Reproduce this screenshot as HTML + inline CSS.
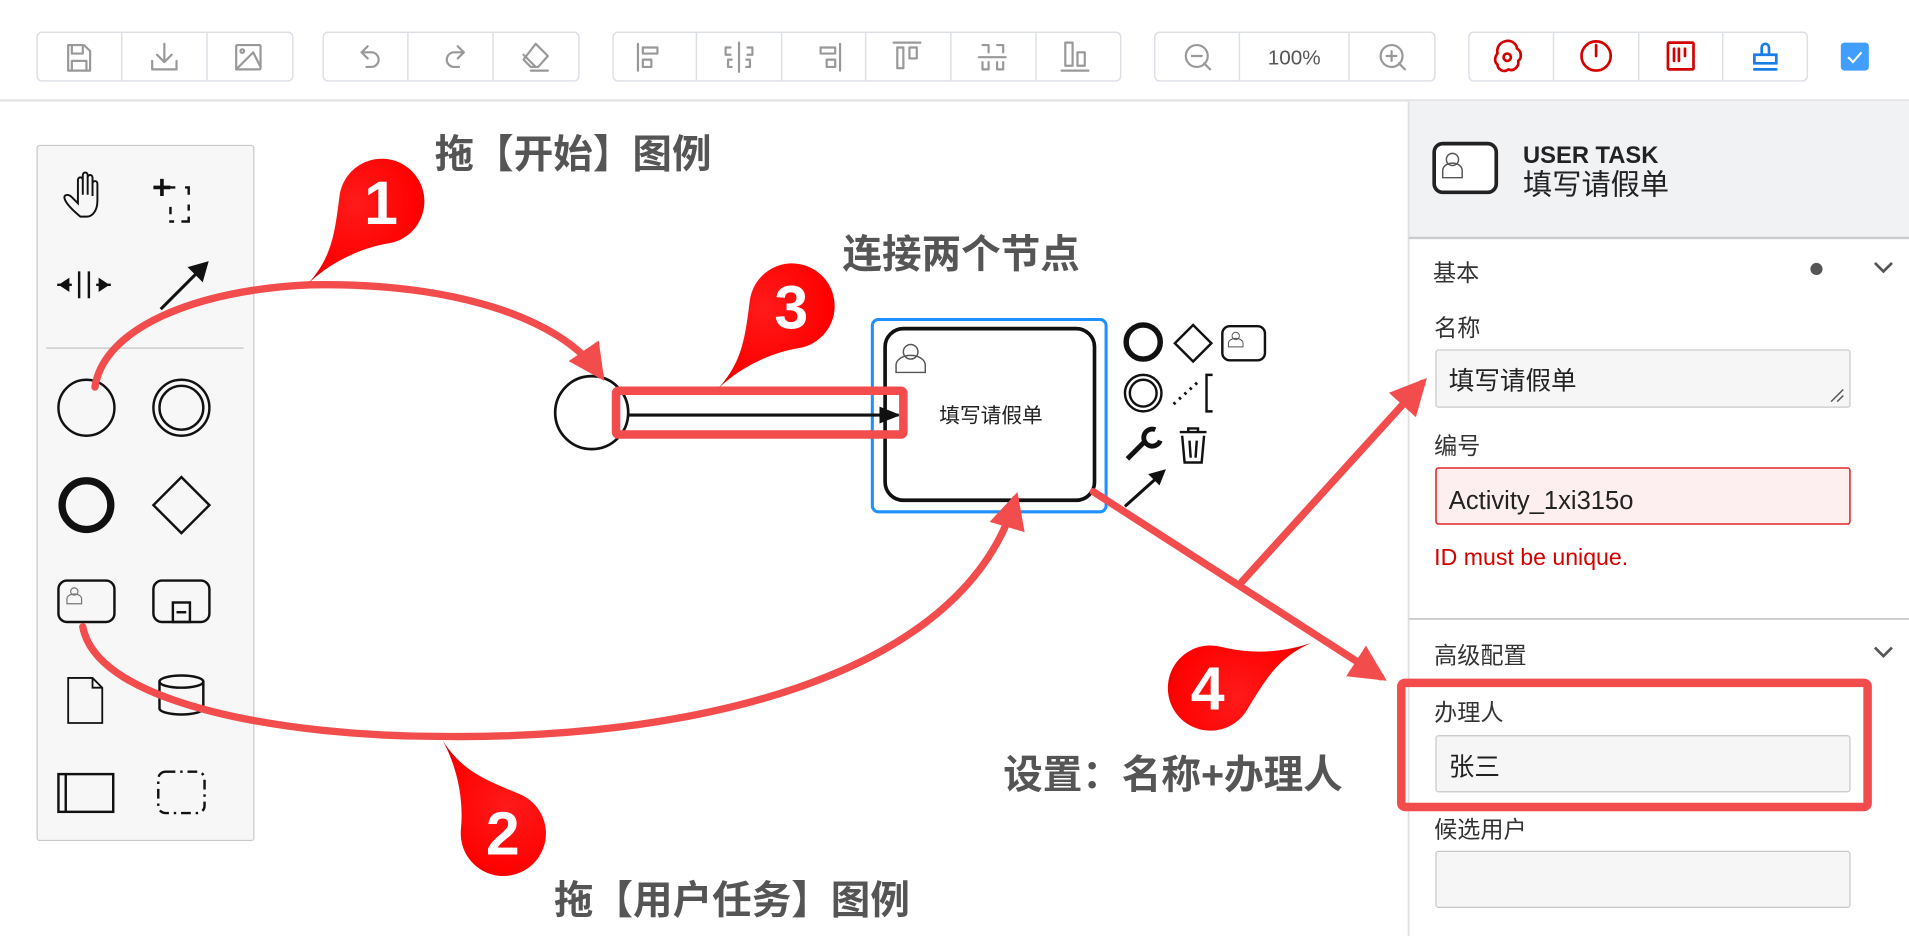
<!DOCTYPE html>
<html><head><meta charset="utf-8">
<style>
html,body{margin:0;padding:0;background:#fff;overflow:hidden}
svg{display:block}
text{font-family:"Liberation Sans","Noto Sans CJK SC",sans-serif}
.lbl{font-size:19px;fill:#333}
.big{font-size:32.5px;font-weight:bold;fill:#555}
.ti{fill:none;stroke:#999;stroke-width:1.8;stroke-linecap:round;stroke-linejoin:round}
.tr{fill:none;stroke:#d40000;stroke-width:2.2;stroke-linecap:round;stroke-linejoin:round}
.k{fill:none;stroke:#111;stroke-width:2}
</style></head><body>
<svg width="1909" height="936" viewBox="0 0 1568 769" preserveAspectRatio="none" xmlns="http://www.w3.org/2000/svg">
<defs>
<marker id="ah" viewBox="0 0 10 10" refX="8" refY="5" markerWidth="5" markerHeight="5" orient="auto"><path d="M0,0 L10,5 L0,10 Z" fill="#f24c4c"/></marker>
<marker id="bh" viewBox="0 0 10 10" refX="9" refY="5" markerWidth="7" markerHeight="7" orient="auto"><path d="M0,1 L10,5 L0,9 Z" fill="#111"/></marker>
<radialGradient id="pg" cx="0.4" cy="0.35" r="0.7"><stop offset="0" stop-color="#ff1a1a"/><stop offset="0.8" stop-color="#f00"/><stop offset="1" stop-color="#c00"/></radialGradient>
<path id="pin" d="M-60,67 C-40,45 -38,25 -34,-6 A35,35 0 1 1 6,34 C-18,38 -42,50 -60,67 Z"/>
</defs>

<!-- toolbar -->
<line x1="0" y1="82.5" x2="1568" y2="82.5" stroke="#e4e4e6" stroke-width="2"/>
<g fill="#fff" stroke="#dcdfe6" stroke-width="1.2">
<rect x="30.5" y="26.5" width="210" height="40" rx="4"/>
<rect x="265.5" y="26.5" width="210" height="40" rx="4"/>
<rect x="503.5" y="26.5" width="417" height="40" rx="4"/>
<rect x="948.5" y="26.5" width="230" height="40" rx="4"/>
<rect x="1206.5" y="26.5" width="278" height="40" rx="4"/>
</g>
<g stroke="#dcdfe6" stroke-width="1.2">
<line x1="100" y1="27" x2="100" y2="66"/><line x1="170" y1="27" x2="170" y2="66"/>
<line x1="335" y1="27" x2="335" y2="66"/><line x1="405" y1="27" x2="405" y2="66"/>
<line x1="572" y1="27" x2="572" y2="66"/><line x1="642" y1="27" x2="642" y2="66"/><line x1="711" y1="27" x2="711" y2="66"/><line x1="781" y1="27" x2="781" y2="66"/><line x1="851" y1="27" x2="851" y2="66"/>
<line x1="1018" y1="27" x2="1018" y2="66"/><line x1="1108" y1="27" x2="1108" y2="66"/>
<line x1="1276" y1="27" x2="1276" y2="66"/><line x1="1346" y1="27" x2="1346" y2="66"/><line x1="1415" y1="27" x2="1415" y2="66"/>
</g>
<g class="ti">
<path d="M56,37 h13 l5,5 v16 h-18 z M59,37 v7 h9 v-7 M59,58 v-8 h12 v8"/>
<path d="M135,36 v14 M129,45 l6,6 6,-6 M125,50 v7 h20 v-7"/>
<rect x="194" y="37" width="20" height="20" rx="1"/><circle cx="199" cy="42" r="1.5"/><path d="M194,57 l14,-14 6,12"/>
<path d="M302,38 l-5,5 5,5 M297,43 h8 a6,6 0 0 1 0,12 h-4"/>
<path d="M376,38 l5,5 -5,5 M381,43 h-8 a6,6 0 0 0 0,12 h4"/>
<path d="M440,36 l10,10 -8,9 -6,0 -6,-6 z M430,45 l10,10 M436,58 h14"/>
</g>
<g class="ti">
<path d="M524,36 v22 M528,39 h12 v5 h-12 z M528,49 h7 v6 h-7 z"/>
<path d="M607,35 v24 M600,39 h-4 v6 h4 M614,39 h4 v6 h-4 M601,49 h-3 v6 h3 M613,49 h3 v6 h-3"/>
<path d="M690,36 v22 M686,39 h-12 v5 h12 z M686,49 h-7 v6 h7 z"/>
<path d="M734,35 h22 M737,39 h5 v17 h-5 z M747,39 h6 v9 h-6 z"/>
<path d="M804,47 h22 M807,37 h5 v6 M819,37 h5 v6 M807,51 v6 h5 v-6 M819,51 v6 h5 v-6"/>
<path d="M872,58 h22 M875,35 h6 v19 h-6 z M885,43 h6 v11 h-6 z"/>
</g>
<g class="ti">
<circle cx="983" cy="46" r="9"/><path d="M979,46 h8 M989,52 l5,5"/>
<circle cx="1143" cy="46" r="9"/><path d="M1139,46 h8 M1143,42 v8 M1149,52 l5,5"/>
</g>
<text x="1063" y="53" text-anchor="middle" font-size="17" fill="#555">100%</text>
<g class="tr">
<path d="M1236,34 c6,-2 10,3 10,6 c4,2 4,8 1,10 c1,5 -4,9 -8,7 c-4,3 -9,0 -9,-4 c-3,-2 -2,-7 0,-9 c-1,-5 2,-9 6,-10 z"/><circle cx="1238" cy="47" r="3"/>
<circle cx="1311" cy="46" r="12"/><path d="M1311,37 v9"/>
<rect x="1370" y="35" width="21" height="22" rx="1"/><path d="M1375,40 v10 M1379,40 v10 M1384,40 v6"/>
</g>
<g fill="none" stroke="#1a7de6" stroke-width="2.2" stroke-linecap="round">
<path d="M1447,45 v-6 a3,3 0 0 1 6,0 v6 M1441,45 h18 v7 h-18 z M1441,57 h18"/>
</g>
<rect x="1512" y="35" width="23" height="23" rx="3" fill="#409eff"/>
<path d="M1518,47 l4,4 7,-8" fill="none" stroke="#fff" stroke-width="1.8"/>

<!-- right panel -->
<rect x="1157" y="83" width="411" height="112" fill="#f1f2f4"/>
<line x1="1157" y1="83" x2="1157" y2="769" stroke="#e0e0e3" stroke-width="1.5"/>
<line x1="1157" y1="195.5" x2="1568" y2="195.5" stroke="#ccc" stroke-width="2"/>
<rect x="1178" y="118" width="51" height="40" rx="7" fill="#fff" stroke="#222" stroke-width="3"/>
<g fill="none" stroke="#555" stroke-width="1.2"><circle cx="1193" cy="131" r="5"/><path d="M1185,146 v-6 a8,6 0 0 1 16,0 v6 z"/></g>
<text x="1251" y="134" font-size="19.5" font-weight="bold" fill="#222">USER TASK</text>
<text x="1251" y="160" font-size="24" fill="#222">填写请假单</text>
<text x="1177" y="231" class="lbl" font-size="21">基本</text>
<circle cx="1492" cy="221" r="5" fill="#555"/>
<path d="M1540,216 l7,7 7,-7" fill="none" stroke="#555" stroke-width="2.2"/>
<text x="1178" y="276" class="lbl">名称</text>
<rect x="1179.5" y="287.5" width="340" height="47" rx="2" fill="#f6f6f6" stroke="#c8c8cc"/>
<text x="1190" y="320" font-size="21" fill="#222">填写请假单</text>
<path d="M1504,330 l10,-10 M1509,330 l5,-5" stroke="#555" stroke-width="1.2"/>
<text x="1178" y="373" class="lbl">编号</text>
<rect x="1179.5" y="384.5" width="340" height="46" rx="2" fill="#fdeff0" stroke="#e02828" stroke-width="1.3"/>
<text x="1190" y="418" font-size="21" fill="#222">Activity_1xi315o</text>
<text x="1178" y="464" font-size="19" fill="#d40000">ID must be unique.</text>
<line x1="1157" y1="508.5" x2="1568" y2="508.5" stroke="#ccc" stroke-width="1.5"/>
<text x="1178" y="545" class="lbl" font-size="20">高级配置</text>
<path d="M1540,532 l7,7 7,-7" fill="none" stroke="#555" stroke-width="2.2"/>
<text x="1178" y="592" class="lbl">办理人</text>
<rect x="1179.5" y="604.5" width="340" height="46" rx="2" fill="#f6f6f6" stroke="#c8c8cc"/>
<text x="1190" y="637" font-size="21" fill="#222">张三</text>
<text x="1178" y="688" class="lbl">候选用户</text>
<rect x="1179.5" y="699.5" width="340" height="46" rx="2" fill="#f6f6f6" stroke="#c8c8cc"/>
<rect x="1151" y="561" width="383" height="102" rx="3" fill="none" stroke="#f24c4c" stroke-width="7"/>

<!-- palette -->
<rect x="30.5" y="119.5" width="178" height="571" rx="2" fill="#f7f7f7" stroke="#c8c8cc"/>
<line x1="38" y1="286" x2="200" y2="286" stroke="#ccc" stroke-width="1.2"/>
<g class="k">
<path d="M66,178 c-6,-5 -12,-11 -13,-15 c-1,-3 3,-4 6,-1 l5,5 v-19 c0,-3 4,-3 4,0 v12 v-16 c0,-3 4,-3 4,0 v16 v-14 c0,-3 4,-3 4,0 v15 v-10 c0,-3 4,-3 4,0 v14 c0,8 -4,13 -9,13 z" stroke-width="1.6"/>
<path d="M126,154 h14 M133,147 v14" stroke-width="3"/>
<path d="M140,154 h4 M152,154 h3 v6 M155,168 v5 M155,178 v4 h-6 M143,182 h-4 M140,176 v-6" stroke-width="2"/>
<path d="M65,223 v22 M73,223 v22 M47,234 h12 M91,234 h-12" stroke-width="2"/>
<path d="M50,234 l6,-4 v8 z M88,234 l-6,-4 v8 z" fill="#111"/>
<path d="M132,254 l33,-33" stroke-width="2.5"/><path d="M170,216 l-14,4 10,10 z" fill="#111"/>
<circle cx="71" cy="335" r="23"/>
<circle cx="149" cy="335" r="23"/><circle cx="149" cy="335" r="18"/>
<circle cx="71" cy="415" r="20" stroke-width="6"/>
<path d="M149,392 l23,23 -23,23 -23,-23 z"/>
<rect x="48" y="477" width="46" height="34" rx="7"/>
<rect x="126" y="477" width="46" height="34" rx="7"/><rect x="142" y="495" width="14" height="16"/><path d="M145,503 h8"/>
<path d="M56,557 h20 l8,8 v29 h-28 z M76,557 v8 h8" stroke-width="1.5"/>
<ellipse cx="149" cy="560" rx="18" ry="5"/><path d="M131,560 v22 a18,5 0 0 0 36,0 v-22" />
<rect x="48" y="636" width="45" height="31"/><path d="M54,636 v31"/>
<rect x="130" y="634" width="38" height="34" rx="6" stroke-dasharray="8 4 2 4"/>
</g>
<g fill="none" stroke="#777" stroke-width="1"><circle cx="61" cy="486" r="3"/><path d="M55,496 v-4 a6,4 0 0 1 12,0 v4 z"/></g>

<!-- diagram -->
<circle cx="486" cy="339" r="30" fill="#fff" stroke="#111" stroke-width="2.2"/>
<rect x="716.5" y="262.5" width="192" height="158" rx="5" fill="none" stroke="#1e90ff" stroke-width="2.5"/>
<rect x="727" y="270" width="172" height="141" rx="15" fill="#fff" stroke="#111" stroke-width="3"/>
<line x1="516" y1="341" x2="738" y2="341" stroke="#111" stroke-width="2.5" marker-end="url(#bh)"/>
<g fill="none" stroke="#555" stroke-width="1.2"><circle cx="748" cy="289" r="6"/><path d="M736,306 v-6 a12,8 0 0 1 24,0 v6 z"/></g>
<text x="814" y="347" text-anchor="middle" font-size="17" fill="#222">填写请假单</text>
<rect x="506" y="321" width="236" height="36" rx="2" fill="none" stroke="#f24c4c" stroke-width="7"/>
<g class="k">
<circle cx="939" cy="281" r="14" stroke-width="4.5"/>
<path d="M980,267 l15,15 -15,15 -15,-15 z"/>
<rect x="1004" y="268" width="35" height="28" rx="6"/>
<circle cx="939" cy="323" r="15"/><circle cx="939" cy="323" r="11"/>
<path d="M964,332 l22,-20" stroke-dasharray="2 4" stroke-width="2.5"/><path d="M996,308 h-5 v30 h5"/>
<path d="M926,377 l14,-14" stroke-width="4"/><path d="M949,353 a7,7 0 1 0 4,9" stroke-width="4"/>
<path d="M969,355 h22 M976,355 v-3 h8 v3 M971,358 l2,22 h14 l2,-22 M977,362 l1,14 M983,362 l-1,14"/>
<path d="M924,416 l28,-25" stroke-width="2.5"/><path d="M956,387 l-11,3 7,7 z" fill="#111"/>
</g>
<g fill="none" stroke="#555" stroke-width="0.8"><circle cx="1015" cy="276" r="3"/><path d="M1009,285 v-3 a6,4 0 0 1 12,0 v3 z"/></g>

<g fill="none" stroke="#f24c4c" stroke-width="6" stroke-linecap="round">
<path d="M78,318 C85,270 160,238 255,234 C370,232 460,260 493,308" marker-end="url(#ah)"/>
<path d="M68,515 C80,580 240,605 360,605 C560,608 790,560 834,410" marker-end="url(#ah)"/>
<path d="M898,404 L1134,556" marker-end="url(#ah)"/>
<path d="M1020,478 L1168,315" marker-end="url(#ah)"/>
</g>

<g fill="url(#pg)">
<use href="#pin" transform="translate(313,166)"/>
<use href="#pin" transform="translate(650,252)"/>
<use href="#pin" transform="translate(413,684) rotate(105)"/>
<use href="#pin" transform="translate(995,565) rotate(-156)"/>
</g>
<g font-size="50" font-weight="bold" fill="#fff" text-anchor="middle" font-family="Liberation Sans,sans-serif">
<text x="313" y="184">1</text>
<text x="650" y="270">3</text>
<text x="413" y="702">2</text>
<text x="992" y="583">4</text>
</g>

<text x="357" y="138" class="big">拖【开始】图例</text>
<text x="692" y="220" class="big">连接两个节点</text>
<text x="824" y="648" class="big">设置：名称+办理人</text>
<text x="455" y="751" class="big">拖【用户任务】图例</text>
</svg>
</body></html>
